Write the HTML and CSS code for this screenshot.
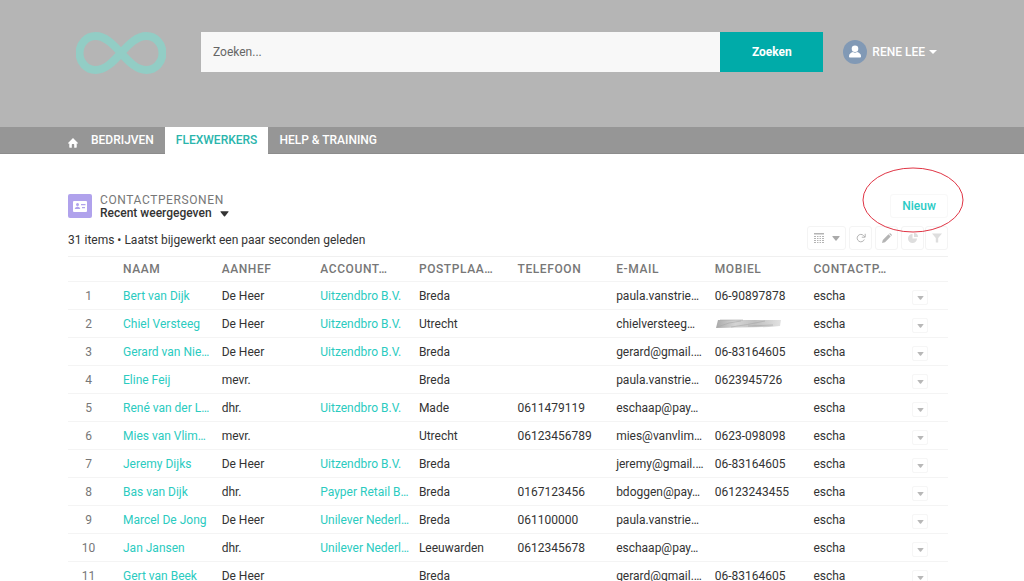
FILE: index.html
```html
<!DOCTYPE html>
<html lang="nl">
<head>
<meta charset="utf-8">
<meta name="viewport" content="width=device-width, initial-scale=1">
<title>Contactpersonen</title>
<link rel="stylesheet" href="styles.css">
</head>
<body>
<svg class="sprite" aria-hidden="true">
  <symbol id="caret" viewBox="0 0 10 6"><path d="M1 0h8q1 0 .4.8L5.6 5.5q-.6.6-1.2 0L.6.8Q0 0 1 0z"/></symbol>
</svg>
<header class="banner">
  <a class="logo" href="#" aria-label="Startpagina">
    <svg viewBox="0 0 90 42"><path d="M45 21C37 12 29 4 19.500 4a16 17 0 0 0 0 34C29 38 37 30 45 21S61 4 70.500 4a16 17 0 0 1 0 34C61 38 53 30 45 21z"/></svg>
  </a>
  <form class="search" role="search">
    <input type="search" aria-label="Zoeken" placeholder="Zoeken...">
    <button type="button">Zoeken</button>
  </form>
  <button class="profile" type="button">
    <svg class="avatar" viewBox="0 0 24 24"><circle class="disc" cx="12" cy="12" r="12"/><circle cx="12" cy="8.800" r="3.300"/><path d="M6 16.200c0-2.400 2-3.600 4-4.200 1.200.9 2.800.9 4 0 2 .6 4 1.800 4 4.200 0 1-.5 1.300-1.200 1.300H7.200c-.7 0-1.200-.3-1.200-1.300z"/></svg>
    <span>RENE LEE</span>
    <svg class="tip" viewBox="0 0 8 4"><path d="M0 0h8L4 4z"/></svg>
  </button>
</header>
<nav class="tabs" aria-label="Hoofdmenu">
  <a class="home" href="#" aria-label="Home"><svg viewBox="0 0 10 10"><path d="M5 0L0 5q-.2.600.4.600H1.300V9.300q0 .4.500.4H3.800V6.500q0-.4.400-.4H5.800q.4 0 .4.400V9.700H8.200q.5 0 .5-.4V5.600H9.600q.6 0 .4-.6z"/></svg></a>
  <a href="#">BEDRIJVEN</a>
  <a class="active" href="#" aria-current="page">FLEXWERKERS</a>
  <a href="#">HELP &amp; TRAINING</a>
</nav>
<main class="list">
  <div class="heading">
    <svg class="entity" viewBox="0 0 24 24" aria-hidden="true"><rect class="tile" width="24" height="24" rx="2"/><rect x="5" y="7" width="14" height="11" rx="1"/><g class="tile"><circle cx="9.500" cy="10.500" r="1.500"/><path d="M6.700 15q0-2 2.800-2.500 2.800.5 2.800 2.500zM13 10h4.500v1.300H13zM14 13h3v1.300h-3z"/></g></svg>
    <div class="titles">
      <h1>CONTACTPERSONEN</h1>
      <button class="view" type="button">Recent weergegeven <svg><use href="#caret"/></svg></button>
    </div>
    <div class="create">
      <button class="new" type="button">Nieuw</button>
      <svg class="marker" viewBox="0 0 102 66" aria-hidden="true"><ellipse cx="51" cy="33" rx="50" ry="32"/></svg>
    </div>
  </div>
  <div class="status">
    <p>31 items • Laatst bijgewerkt een paar seconden geleden</p>
    <div class="tools">
      <button class="wide" type="button" aria-label="Weergave"><svg viewBox="0 0 10 10"><path d="M0 0h10v1.500H0zM0 3h2v1H0zM3 3h1.500v1H3zM5.500 3H7v1H5.500zM8 3h2v1H8zM0 5h2v1H0zM3 5h1.500v1H3zM5.500 5H7v1H5.500zM8 5h2v1H8zM0 7h2v1H0zM3 7h1.500v1H3zM5.500 7H7v1H5.500zM8 7h2v1H8zM0 9h2v1H0zM3 9h1.500v1H3zM5.500 9H7v1H5.500zM8 9h2v1H8z"/></svg><svg class="caret"><use href="#caret"/></svg></button>
      <button type="button" aria-label="Vernieuwen"><svg viewBox="0 0 10 10"><path class="line" d="M8.300 6.500A3.700 3.700 0 1 1 7.600 2.600L9 4M9.200.8V4.200H5.800"/></svg></button>
      <button type="button" aria-label="Bewerken"><svg viewBox="0 0 10 10"><path d="M0 10l.8-3L6.500 1.300l2.200 2.200L3 9.200zM7.100.7q.7-.9 1.500-.3l1 1q.6.800-.3 1.500z"/></svg></button>
      <div class="pair">
        <button type="button" disabled aria-label="Grafiek"><svg viewBox="0 0 10 10"><path d="M4.500 1v4.500H9A4.500 4.500 0 1 1 4.500 1zM6 0a4 4 0 0 1 4 4H6z"/></svg></button>
        <button type="button" disabled aria-label="Filter"><svg viewBox="0 0 10 10"><path d="M0 .5h10L6.200 5v4.500H3.800V5z"/></svg></button>
      </div>
    </div>
  </div>
  <table>
    <colgroup><col class="index"><col span="8"><col class="action"></colgroup>
    <thead>
      <tr><th></th><th>NAAM</th><th>AANHEF</th><th>ACCOUNT…</th><th>POSTPLAA…</th><th>TELEFOON</th><th>E-MAIL</th><th>MOBIEL</th><th>CONTACTP…</th><th></th></tr>
    </thead>
    <tbody>
      <tr><td>1</td><td><a href="#">Bert van Dijk</a></td><td>De Heer</td><td><a href="#">Uitzendbro B.V.</a></td><td>Breda</td><td></td><td>paula.vanstrie…</td><td>06-90897878</td><td>escha</td><td><button type="button" aria-label="Acties"><svg><use href="#caret"/></svg></button></td></tr>
      <tr><td>2</td><td><a href="#">Chiel Versteeg</a></td><td>De Heer</td><td><a href="#">Uitzendbro B.V.</a></td><td>Utrecht</td><td></td><td>chielversteeg…</td><td><svg class="redacted" viewBox="0 0 68 12" aria-hidden="true"><defs><linearGradient id="smudge"><stop offset="0" stop-color="#aaa"/><stop offset=".3" stop-color="#d4d4d4"/><stop offset=".6" stop-color="#c0c0c0"/><stop offset="1" stop-color="#e2e2e2"/></linearGradient></defs><path fill="url(#smudge)" d="M3 2L66 2 65 8 54 9 1 10z"/><path class="dark" d="M2 9Q14 4 26 3M16 9Q32 7 50 3M33 8L58 7M5 2H28"/></svg></td><td>escha</td><td><button type="button" aria-label="Acties"><svg><use href="#caret"/></svg></button></td></tr>
      <tr><td>3</td><td><a href="#">Gerard van Nie…</a></td><td>De Heer</td><td><a href="#">Uitzendbro B.V.</a></td><td>Breda</td><td></td><td>gerard@gmail.…</td><td>06-83164605</td><td>escha</td><td><button type="button" aria-label="Acties"><svg><use href="#caret"/></svg></button></td></tr>
      <tr><td>4</td><td><a href="#">Eline Feij</a></td><td>mevr.</td><td></td><td>Breda</td><td></td><td>paula.vanstrie…</td><td>0623945726</td><td>escha</td><td><button type="button" aria-label="Acties"><svg><use href="#caret"/></svg></button></td></tr>
      <tr><td>5</td><td><a href="#">René van der L…</a></td><td>dhr.</td><td><a href="#">Uitzendbro B.V.</a></td><td>Made</td><td>0611479119</td><td>eschaap@pay…</td><td></td><td>escha</td><td><button type="button" aria-label="Acties"><svg><use href="#caret"/></svg></button></td></tr>
      <tr><td>6</td><td><a href="#">Mies van Vlim…</a></td><td>mevr.</td><td></td><td>Utrecht</td><td>06123456789</td><td>mies@vanvlim…</td><td>0623-098098</td><td>escha</td><td><button type="button" aria-label="Acties"><svg><use href="#caret"/></svg></button></td></tr>
      <tr><td>7</td><td><a href="#">Jeremy Dijks</a></td><td>De Heer</td><td><a href="#">Uitzendbro B.V.</a></td><td>Breda</td><td></td><td>jeremy@gmail.…</td><td>06-83164605</td><td>escha</td><td><button type="button" aria-label="Acties"><svg><use href="#caret"/></svg></button></td></tr>
      <tr><td>8</td><td><a href="#">Bas van Dijk</a></td><td>dhr.</td><td><a href="#">Payper Retail B…</a></td><td>Breda</td><td>0167123456</td><td>bdoggen@pay…</td><td>06123243455</td><td>escha</td><td><button type="button" aria-label="Acties"><svg><use href="#caret"/></svg></button></td></tr>
      <tr><td>9</td><td><a href="#">Marcel De Jong</a></td><td>De Heer</td><td><a href="#">Unilever Nederl…</a></td><td>Breda</td><td>061100000</td><td>paula.vanstrie…</td><td></td><td>escha</td><td><button type="button" aria-label="Acties"><svg><use href="#caret"/></svg></button></td></tr>
      <tr><td>10</td><td><a href="#">Jan Jansen</a></td><td>dhr.</td><td><a href="#">Unilever Nederl…</a></td><td>Leeuwarden</td><td>0612345678</td><td>eschaap@pay…</td><td></td><td>escha</td><td><button type="button" aria-label="Acties"><svg><use href="#caret"/></svg></button></td></tr>
      <tr><td>11</td><td><a href="#">Gert van Beek</a></td><td>De Heer</td><td></td><td>Breda</td><td></td><td>gerard@gmail.…</td><td>06-83164605</td><td>escha</td><td><button type="button" aria-label="Acties"><svg><use href="#caret"/></svg></button></td></tr>
    </tbody>
  </table>
</main>
</body>
</html>
```
FILE: styles.css
```css
* { box-sizing: border-box; }

body {
  margin: 0;
  height: 100vh;
  overflow: hidden;
  background: #fff;
  color: #333;
  font: 12px/16px Roboto, "Liberation Sans", sans-serif;
}

a { color: inherit; text-decoration: none; }
button, input { font: inherit; color: inherit; border: 0; padding: 0; background: none; }
svg { display: block; fill: currentColor; }
.sprite { display: none; }

.banner {
  display: flex;
  align-items: flex-start;
  height: 127px;
  padding: 32px 76px 0;
  background: #b5b5b5;
}
.logo { width: 90px; margin-right: 35px; }
.logo path { fill: none; stroke: #92cdc5; stroke-width: 8; }

.search { display: flex; flex: 1; height: 40px; margin-right: 20px; }
.search input {
  flex: 1;
  min-width: 0;
  padding: 0 12px;
  background: #f8f8f8;
  color: #666;
}
.search input::placeholder { color: #666; opacity: 1; }
.search button { width: 103px; background: #00aba9; color: #fff; font-weight: 700; }

.profile {
  display: flex;
  align-items: center;
  height: 40px;
  padding-right: 11px;
  color: #fff;
  font-weight: 500;
}
.avatar { width: 24px; height: 24px; margin-right: 5px; }
.disc { fill: #8199b5; }
.tip { width: 8px; height: 4px; margin-left: 4px; }

.tabs {
  display: flex;
  height: 27px;
  padding: 0 68px;
  background: #969696;
  border-bottom: 1px solid #8c8c8c;
  color: #fff;
  font-weight: 500;
}
.tabs a { height: 27px; padding: 0 11px; line-height: 27px; }
.tabs .home { padding: 11px 2px 0 0; }
.home svg { width: 10px; height: 10px; }
.tabs .active { background: #fff; color: #2ab5ac; }

.list { padding: 40px 76px 0 68px; }
.heading { display: flex; align-items: flex-start; }
.entity { width: 24px; height: 24px; margin-right: 8px; fill: #fff; }
.tile { fill: #b0a2ec; }
.titles { flex: 1; }
.titles h1 {
  margin: 0;
  color: #777;
  font-size: 12px;
  font-weight: 400;
  line-height: 13px;
  letter-spacing: 0.05em;
}
.view { display: flex; align-items: center; gap: 8px; line-height: 13px; font-weight: 500; }
.view svg { width: 9px; height: 6px; }
.create { position: relative; }
.new {
  width: 58px;
  height: 24px;
  border: 1px solid #f8f8f8;
  border-radius: 3px;
  color: #2bcbc5;
  font-weight: 500;
}
.marker {
  position: absolute;
  top: -27px;
  right: -16px;
  width: 102px;
  height: 66px;
  fill: none;
  stroke: #e03545;
  pointer-events: none;
}

.status { display: flex; justify-content: space-between; padding: 6px 0; }
.status p { margin: 6px 0 0; }
.tools { display: flex; gap: 3px; }
.pair { display: flex; gap: 1px; }
.tools button {
  display: flex;
  align-items: center;
  justify-content: center;
  gap: 8px;
  width: 23px;
  height: 24px;
  border: 1px solid #f4f4f4;
  border-radius: 3px;
  color: #b4b4b4;
}
.tools .wide { width: 39px; }
.tools svg { width: 10px; height: 10px; }
.tools .caret { width: 8px; height: 5px; color: #aaa; }
.tools button:disabled { color: #dedede; }
.line { fill: none; stroke: currentColor; stroke-width: 1; }

table {
  width: 100%;
  table-layout: fixed;
  border-collapse: separate;
  border-spacing: 0;
  border-top: 1px solid #f0f0f0;
}
.index { width: 49px; }
.action { width: 42px; }
th, td {
  height: 28px;
  padding: 0 6px;
  border-bottom: 1px solid #f4f4f4;
  overflow: hidden;
  white-space: nowrap;
  text-align: left;
}
th { height: 25px; color: #777; font-weight: 500; letter-spacing: 0.05em; }
td:first-child { padding: 0 8px 0 0; text-align: center; color: #777; }
td a { color: #2bcbbf; }
td button {
  display: flex;
  align-items: center;
  justify-content: center;
  width: 16px;
  height: 15px;
  margin-top: 4px;
  border: 1px solid #f6f6f6;
  border-radius: 2px;
  color: #b8b8b8;
}
td button svg { width: 7px; height: 4px; }
.redacted { width: 68px; height: 12px; }
.dark { fill: none; stroke: #a8a8a8; stroke-width: 1; opacity: 0.6; }
```
